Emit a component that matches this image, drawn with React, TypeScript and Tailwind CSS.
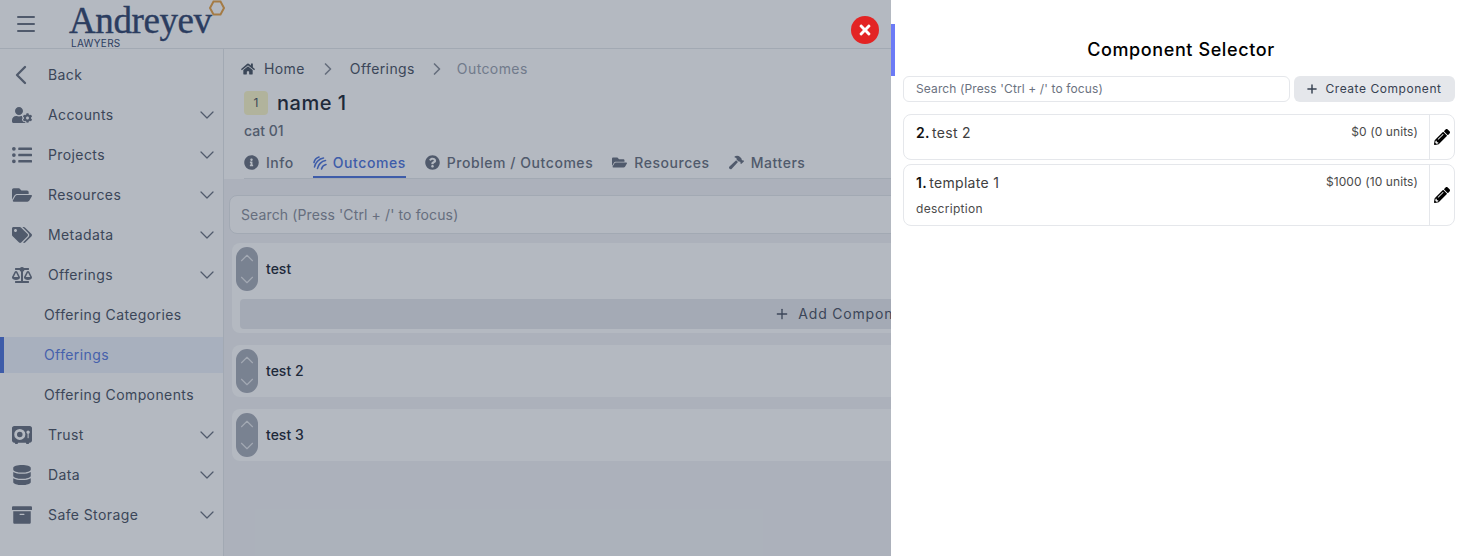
import { useState } from 'react'
import type { ReactNode } from 'react'
import {
  FaArchive,
  FaBalanceScale,
  FaDatabase,
  FaFolderOpen,
  FaHammer,
  FaHome,
  FaInfoCircle,
  FaListUl,
  FaPencilAlt,
  FaQuestionCircle,
  FaTags,
  FaTimes,
  FaUserCog,
} from 'react-icons/fa'
import { FaVault } from 'react-icons/fa6'
import { ChevronDown, ChevronLeft, ChevronRight, ChevronUp, Menu, Plus } from 'lucide-react'

const font = 'font-["Inter","Liberation_Sans",sans-serif]'

function OutcomesIcon() {
  return (
    <svg viewBox="0 0 14 14" className="h-[14px] w-[14px]" fill="none" stroke="currentColor" strokeWidth="1.6" strokeLinecap="round">
      <path d="M1 6.500C1.500 4 3.500 1.800 6 1M1.500 11C2 7 6 2.500 10.500 2M4.500 12.500C5 9 8.500 5 12.500 4.500M8.500 13C9 11 11 9 13 8.500" />
    </svg>
  )
}

function NavRow({ icon, label }: { icon: ReactNode; label: string }) {
  return (
    <div className="flex h-9 items-center pl-3 pr-1 text-[#4c5464]">
      <span className="flex w-9 shrink-0 items-center text-[20px] text-[#6b7280]">{icon}</span>
      <span className="flex-1 text-sm tracking-[0.4px]">{label}</span>
      <ChevronDown size={24} strokeWidth={1.25} className="text-[#6b7280]" />
    </div>
  )
}

function SubRow({ label, active }: { label: string; active?: boolean }) {
  return (
    <div
      className={
        active
          ? 'flex h-9 items-center border-l-4 border-[#4f75dc] bg-[#eef2fb] pl-10 text-sm tracking-[0.4px] text-[#5b7ce0]'
          : 'flex h-9 items-center pl-11 text-sm tracking-[0.4px] text-[#4c5464]'
      }
    >
      {label}
    </div>
  )
}

function Sidebar() {
  return (
    <aside className="flex w-[224px] shrink-0 flex-col gap-1 border-r border-[#e5e7eb] bg-white pt-2">
      <div className="flex h-9 items-center pl-3 text-sm tracking-[0.4px] text-[#4c5464]">
        <span className="flex w-9 shrink-0 items-center text-[#6b7280]">
          <ChevronLeft size={32} strokeWidth={1.75} className="-ml-[7px]" />
        </span>
        Back
      </div>
      <NavRow icon={<FaUserCog />} label="Accounts" />
      <NavRow icon={<FaListUl />} label="Projects" />
      <NavRow icon={<FaFolderOpen />} label="Resources" />
      <NavRow icon={<FaTags />} label="Metadata" />
      <NavRow icon={<FaBalanceScale />} label="Offerings" />
      <SubRow label="Offering Categories" />
      <SubRow label="Offerings" active />
      <SubRow label="Offering Components" />
      <NavRow icon={<FaVault />} label="Trust" />
      <NavRow icon={<FaDatabase />} label="Data" />
      <NavRow icon={<FaArchive />} label="Safe Storage" />
    </aside>
  )
}

function Tab({ icon, label, active }: { icon: ReactNode; label: string; active?: boolean }) {
  return (
    <div
      className={
        active
          ? 'flex h-[29px] items-center gap-[6px] border-b-2 border-[#4f75dc] text-sm font-medium tracking-[0.55px] text-[#4f75dc]'
          : 'flex h-[29px] items-center gap-[7px] border-b-2 border-transparent text-sm font-medium tracking-[0.55px] text-[#6b7280]'
      }
    >
      <span className="text-[15px]">{icon}</span>
      {label}
    </div>
  )
}

function Handle() {
  return (
    <div className="flex h-11 w-[22px] shrink-0 flex-col items-center justify-between rounded-full bg-[#a8adb8] text-[#e5e7eb]">
      <ChevronUp size={22} strokeWidth={1.25} />
      <ChevronDown size={22} strokeWidth={1.25} />
    </div>
  )
}

function OutcomeCard({ name, children }: { name: string; children?: ReactNode }) {
  return (
    <div className="rounded-lg bg-white px-1 pt-1 pb-[4px]">
      <div className="flex h-11 items-center gap-2">
        <Handle />
        <span className="text-sm font-medium text-[#1f2937]">{name}</span>
      </div>
      {children}
    </div>
  )
}

function MainContent() {
  return (
    <main className="min-w-0 flex-1 bg-[#f3f4f6]">
      <div className="bg-white pl-5 pr-4">
        <div className="-ml-[3px] flex h-10 items-center gap-[6px] pb-[1px] text-sm tracking-[0.4px] text-[#6b7280]">
          <FaHome className="text-[14px] text-[#4b5563]" />
          <span className="ml-[3px] text-[#4c5464]">Home</span>
          <ChevronRight size={20} className="mr-[6px] ml-[7px] text-[#8b909b]" />
          <span className="text-[#4c5464]">Offerings</span>
          <ChevronRight size={20} className="mr-[4px] ml-[6px] text-[#8b909b]" />
          <span className="text-[#9ca3af]">Outcomes</span>
        </div>
        <div className="flex h-[28px] items-center gap-[9px]">
          <span className="flex h-6 w-6 items-center justify-center rounded bg-[#fbf7c8] text-xs text-[#4b5563]">1</span>
          <span className="text-xl font-medium tracking-[0.5px] text-[#1f2937]">name 1</span>
        </div>
        <div className="mt-[4px] h-5 text-sm font-medium leading-5 text-[#6b7280]">cat 01</div>
        <div className="mt-[8px] flex gap-[19px] border-b border-[#e5e7eb]">
          <Tab icon={<FaInfoCircle />} label="Info" />
          <Tab icon={<OutcomesIcon />} label="Outcomes" active />
          <Tab icon={<FaQuestionCircle />} label="Problem / Outcomes" />
          <Tab icon={<FaFolderOpen />} label="Resources" />
          <Tab icon={<FaHammer />} label="Matters" />
        </div>
      </div>
      <div className="px-[5px] pt-4">
        <div className="flex h-[39px] items-center rounded-lg border border-[#e5e7eb] bg-white pr-3 pl-[11px] text-sm tracking-[0.12px] text-[#8b909b]">
          Search (Press 'Ctrl + /' to focus)
        </div>
        <div className="mt-[9px] flex flex-col gap-3 px-[3px]">
          <OutcomeCard name="test">
            <div className="mx-1 mt-2 flex h-[30px] items-center justify-center gap-2 rounded bg-[#e8e9ed] text-sm tracking-[0.8px] text-[#4c5464]">
              <Plus size={16} />
              Add Component
            </div>
          </OutcomeCard>
          <OutcomeCard name="test 2" />
          <OutcomeCard name="test 3" />
        </div>
      </div>
    </main>
  )
}

function SelectorCard({ no, name, price, description }: { no: number; name: string; price: string; description?: string }) {
  return (
    <div className="flex rounded-lg border border-[#e5e7eb]">
      <div className="min-w-0 flex-1 pt-2 pr-[11px] pl-3">
        <div className="flex h-5 items-start justify-between">
          <span className="text-sm tracking-[0.3px] text-[#404040]">
            <b className="font-semibold text-[#111111]">{no}.</b> <span className="-ml-[2px]">{name}</span>
          </span>
          <span className="pt-[1px] text-xs tracking-[0.1px] text-[#4a4a4a]">{price}</span>
        </div>
        {description ? <div className="mt-2 pb-2 text-xs tracking-[0.3px] text-[#4a4a4a]">{description}</div> : <div className="h-4" />}
      </div>
      <div className="flex w-[25px] shrink-0 items-center justify-center border-l border-[#e5e7eb] text-black">
        <FaPencilAlt size={16} />
      </div>
    </div>
  )
}

function ComponentSelector() {
  const [query, setQuery] = useState('')
  return (
    <div className="absolute inset-y-0 right-0 w-[576px] bg-white px-3">
      <div className="absolute top-6 left-0 h-[52px] w-1 bg-[#6c7bf6]" />
      <h2 className="pt-[37px] pl-1 text-center text-lg leading-[26px] font-medium tracking-[0.6px] text-black">Component Selector</h2>
      <div className="mt-[13px] flex gap-1">
        <input
          value={query}
          onChange={e => setQuery(e.target.value)}
          placeholder="Search (Press 'Ctrl + /' to focus)"
          className="h-[26px] min-w-0 flex-1 rounded-md border border-[#e5e7eb] px-3 pb-[1px] text-xs tracking-[0.12px] outline-none placeholder:text-[#6b7280]"
        />
        <button className="flex h-[26px] w-[161px] items-center justify-center gap-[6px] rounded-md bg-[#e5e7eb] pr-[2px] text-xs tracking-[0.55px] text-[#374151]">
          <Plus size={14} strokeWidth={2.5} />
          Create Component
        </button>
      </div>
      <div className="mt-3 flex flex-col gap-1">
        <SelectorCard no={2} name="test 2" price="$0 (0 units)" />
        <SelectorCard no={1} name="template 1" price="$1000 (10 units)" description="description" />
      </div>
    </div>
  )
}

export default function App() {
  return (
    <div className={`relative h-[556px] w-[1467px] overflow-hidden bg-white ${font}`}>
      <header className="flex h-[49px] items-center border-b border-[#e5e7eb] bg-white pl-[14px]">
        <Menu size={24} className="text-[#6b7280]" />
        <div className="relative ml-[32px] h-[48px] w-[160px] text-[#34476f]">
          <span className='absolute top-[4px] left-[-1px] font-["Liberation_Serif",serif] text-[37px] leading-[34px] tracking-[-0.4px] [-webkit-text-stroke:0.4px_#34476f]'>Andreyev</span>
          <span className="absolute top-[38px] left-[1px] text-[10px] leading-[10px] tracking-[0.3px]">LAWYERS</span>
          <svg viewBox="0 0 16 16" className="absolute top-0 left-[139px] h-4 w-4" fill="none" stroke="#e8a347" strokeWidth="2">
            <path d="M4.500 1.500h7L15 8l-3.500 6.500h-7L1 8z" />
          </svg>
        </div>
      </header>
      <div className="flex h-[507px]">
        <Sidebar />
        <MainContent />
      </div>
      {/* backdrop, the drawer sits on top of it */}
      <div className="absolute inset-0 bg-[#1c2b43]/[.33]" />
      <ComponentSelector />
      <button className="absolute top-4 left-[851px] flex h-7 w-7 items-center justify-center rounded-full bg-[#e32424] text-white">
        <FaTimes size={16} />
      </button>
    </div>
  )
}
